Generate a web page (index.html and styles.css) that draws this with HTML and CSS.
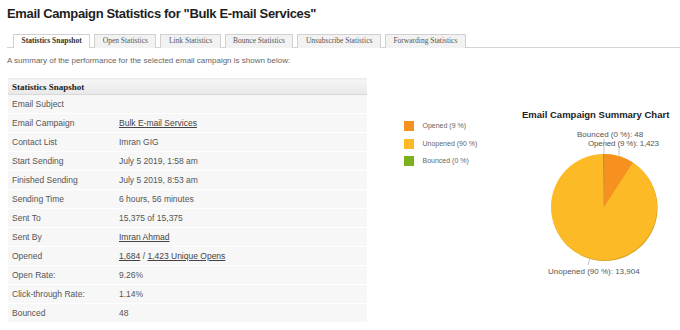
FILE: index.html
```html
<!DOCTYPE html>
<html>
<head>
<meta charset="utf-8">
<link rel="stylesheet" href="styles.css">
</head>
<body>
<div class="page">
  <h1 class="title">Email Campaign Statistics for "Bulk E-mail Services"</h1>
  <div class="tabs">
    <span class="tab active">Statistics Snapshot</span>
    <span class="tab">Open Statistics</span>
    <span class="tab">Link Statistics</span>
    <span class="tab">Bounce Statistics</span>
    <span class="tab">Unsubscribe Statistics</span>
    <span class="tab">Forwarding Statistics</span>
  </div>
  <p class="intro">A summary of the performance for the selected email campaign is shown below:</p>
  <div class="content">
    <table class="stats">
      <thead>
        <tr><th colspan="2">Statistics Snapshot</th></tr>
      </thead>
      <tbody>
        <tr><td class="lbl">Email Subject</td><td></td></tr>
        <tr><td class="lbl">Email Campaign</td><td><a class="link">Bulk E-mail Services</a></td></tr>
        <tr><td class="lbl">Contact List</td><td>Imran GIG</td></tr>
        <tr><td class="lbl">Start Sending</td><td>July 5 2019, 1:58 am</td></tr>
        <tr><td class="lbl">Finished Sending</td><td>July 5 2019, 8:53 am</td></tr>
        <tr><td class="lbl">Sending Time</td><td>6 hours, 56 minutes</td></tr>
        <tr><td class="lbl">Sent To</td><td>15,375 of 15,375</td></tr>
        <tr><td class="lbl">Sent By</td><td><a class="link">Imran Ahmad</a></td></tr>
        <tr><td class="lbl">Opened</td><td><a class="link">1,684</a> / <a class="link">1,423 Unique Opens</a></td></tr>
        <tr><td class="lbl">Open Rate:</td><td>9.26%</td></tr>
        <tr><td class="lbl">Click-through Rate:</td><td>1.14%</td></tr>
        <tr><td class="lbl">Bounced</td><td>48</td></tr>
      </tbody>
    </table>
    <div class="legend">
      <div class="legend-item"><span class="swatch sw-opened"></span><span>Opened (9 %)</span></div>
      <div class="legend-item"><span class="swatch sw-unopened"></span><span>Unopened (90 %)</span></div>
      <div class="legend-item"><span class="swatch sw-bounced"></span><span>Bounced (0 %)</span></div>
    </div>
    <div class="chart">
      <div class="chart-title">Email Campaign Summary Chart</div>
      <svg class="pie" width="160" height="160" viewBox="0 0 160 160">
        <text class="pie-label" x="57" y="12">Bounced (0 %): 48</text>
        <text class="pie-label" x="68" y="21" textLength="71">Opened (9 %): 1,423</text>
        <line x1="84" y1="14" x2="84" y2="29" stroke="#b5b5b5" stroke-width="0.8"/>
        <line x1="99" y1="23" x2="99" y2="32" stroke="#b5b5b5" stroke-width="0.8"/>
        <circle cx="84.6" cy="83" r="53" fill="#d9a11f"/>
        <circle cx="84" cy="82" r="53" fill="#fcbb26"/>
        <path d="M84 82 L84 29 A53 53 0 0 1 112.9 37.6 Z" fill="#f6901f"/>
        <path d="M84 82 L83 29 L84 29 Z" fill="#7bb21c"/>
        <line x1="84" y1="29" x2="84" y2="82" stroke="#9aa33a" stroke-width="0.6" opacity="0.6"/>
        <line x1="70" y1="133" x2="68" y2="140" stroke="#b5b5b5" stroke-width="0.8"/>
        <text class="pie-label" x="28" y="149">Unopened (90 %): 13,904</text>
      </svg>
    </div>
  </div>
</div>
</body>
</html>
```

FILE: styles.css
```css
html, body {
  margin: 0;
  padding: 0;
  background: #ffffff;
}

.page {
  width: 680px;
  height: 330px;
  overflow: hidden;
  font-family: "Liberation Sans Narrow", "Liberation Sans", Arial, sans-serif;
  color: #444;
}

.title {
  margin: 0;
  padding: 6px 0 0 7px;
  font-family: "Liberation Sans", Arial, sans-serif;
  font-size: 13px;
  font-weight: bold;
  color: #1e1e1e;
  line-height: 16px;
  letter-spacing: -0.35px;
}

.tabs {
  display: flex;
  gap: 4px;
  margin: 12px 0 0 7px;
  padding-left: 6px;
  border-bottom: 1px solid #d4d4d4;
  height: 13px;
}

.tab {
  box-sizing: border-box;
  height: 14px;
  padding: 0 7.5px;
  border: 1px solid #d0d0d0;
  border-bottom: none;
  background: #f2f2f2;
  font-family: "Liberation Serif", "Times New Roman", serif;
  font-size: 7.5px;
  line-height: 12px;
  color: #555;
}

.tab.active {
  background: #ffffff;
  font-weight: bold;
  color: #333;
}

.intro {
  margin: 8px 0 0 7px;
  font-size: 8px;
  line-height: 10px;
  color: #666;
}

.content {
  display: flex;
  align-items: flex-start;
  margin-top: 12px;
  padding-left: 8px;
}

.stats {
  width: 361px;
  border-collapse: collapse;
  font-size: 8.5px;
  color: #555;
}

.stats th {
  height: 15px;
  padding: 0 0 0 4px;
  text-align: left;
  font-family: "Liberation Serif", "Times New Roman", serif;
  font-size: 9px;
  font-weight: bold;
  color: #222;
  background: linear-gradient(#f6f6f6, #e8e8e8);
  border-bottom: 1px solid #d8d8d8;
  border-top: 1px solid #ececec;
}

.stats td {
  height: 18px;
  padding: 0;
  background: #f7f7f7;
  border-top: 1px solid #ffffff;
  vertical-align: middle;
}

.stats td.lbl {
  width: 107px;
  padding-left: 4px;
}

.link {
  color: #444;
  text-decoration: underline;
}

.legend {
  display: flex;
  flex-direction: column;
  gap: 7.5px;
  margin: 43px 0 0 37px;
  width: 116px;
}

.legend-item {
  display: flex;
  align-items: center;
  gap: 8px;
  height: 10px;
  font-family: "Liberation Sans", Arial, sans-serif;
  font-size: 7px;
  line-height: 10px;
  color: #666;
}

.swatch {
  flex: none;
  width: 10px;
  height: 10px;
}

.sw-opened { background: #f6901f; }
.sw-unopened { background: #fcbb26; }
.sw-bounced { background: #7bb21c; }

.chart {
  display: flex;
  flex-direction: column;
  margin-top: 31px;
}

.chart-title {
  padding-left: 2px;
  font-family: "Liberation Sans", Arial, sans-serif;
  font-size: 9.5px;
  font-weight: bold;
  color: #222;
  line-height: 12px;
}

.pie {
  display: block;
  margin-top: 4px;
}

.pie-label {
  font-family: "Liberation Sans", Arial, sans-serif;
  font-size: 8px;
  fill: #555;
}
```
